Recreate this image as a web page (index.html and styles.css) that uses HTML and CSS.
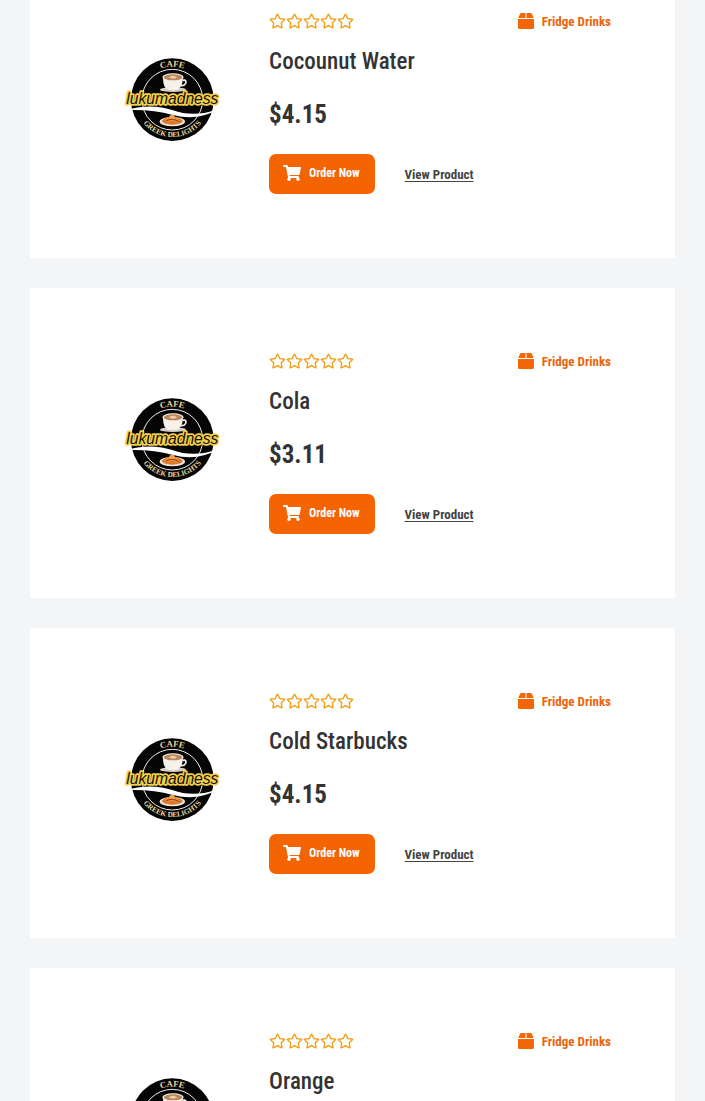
FILE: index.html
```html
<!DOCTYPE html>
<html lang="en">

<head>
    <meta charset="UTF-8">
    <meta name="viewport" content="width=device-width, initial-scale=1.0">
    <title>Fridge Drinks</title>
    <link rel="stylesheet" href="styles.css">
</head>

<body>
    <!-- shared icons -->
    <svg class="sprite" width="0" height="0" aria-hidden="true">
        <symbol id="star" viewBox="0 0 576 512">
            <path d="M528.1 171.5L382 150.2 316.7 17.8c-11.7-23.6-45.6-23.9-57.4 0L194 150.2 47.9 171.5c-26.2 3.8-36.7 36.1-17.7 54.6l105.7 103-25 145.500c-4.500 26.300 23.200 46 46.400 33.700L288 439.600l130.700 68.700c23.200 12.200 50.900-7.400 46.400-33.700l-25-145.500 105.700-103c19-18.500 8.500-50.800-17.700-54.600zM388.600 312.300l23.700 138.400L288 385.400l-124.300 65.300 23.700-138.400-100.600-98 139-20.200 62.200-126 62.200 126 139 20.200-100.600 98z" />
        </symbol>
        <symbol id="stars" viewBox="0 0 85 16">
            <use href="#star" x="0" width="17" height="16" />
            <use href="#star" x="17" width="17" height="16" />
            <use href="#star" x="34" width="17" height="16" />
            <use href="#star" x="51" width="17" height="16" />
            <use href="#star" x="68" width="17" height="16" />
        </symbol>
        <symbol id="box" viewBox="0 0 16 16">
            <path d="M3.500 0H7.500V5H0.300L2 1.100Q2.400 0 3.500 0zM8.500 0H12.500Q13.600 0 14 1.100L15.700 5H8.500zM0 6H16V14.500Q16 16 14.500 16H1.500Q0 16 0 14.500z" />
        </symbol>
        <symbol id="cart" viewBox="0 0 576 512">
            <path d="M528.100 301.300l47.300-208C578.800 78.300 567.400 64 552 64H159.200l-9.200-44.800C147.800 8 137.900 0 126.500 0H24C10.700 0 0 10.700 0 24v16c0 13.300 10.700 24 24 24h69.900l70.200 343.400C147.300 417.100 136 435.200 136 456c0 30.900 25.100 56 56 56s56-25.100 56-56c0-15.700-6.400-29.800-16.800-40h209.600C430.400 426.200 424 440.300 424 456c0 30.900 25.100 56 56 56s56-25.100 56-56c0-22.200-12.900-41.300-31.600-50.400l5.500-24.300c3.400-15-8-29.300-23.400-29.300H218.100l-6.500-32h293.100c11.200 0 20.900-7.800 23.400-18.700z" />
        </symbol>
        <symbol id="logo" viewBox="24 18 288 264">
            <path id="arc-top" fill="none" d="M70 149A99 99 0 0 1 268 149" />
            <path id="arc-bottom" fill="none" d="M57 149A112 112 0 0 0 281 149" />
            <circle cx="169" cy="149" r="124" fill="#050505" />
            <circle cx="169" cy="149" r="91" fill="none" stroke="#eee" stroke-width="3" />
            <!-- coffee cup -->
            <ellipse cx="171" cy="119" rx="39" ry="7" fill="#d9cfc8" />
            <path d="M141 85Q141 117 160 120H181Q199 116 201 85z" fill="#f7f1ec" />
            <path d="M200 91Q213 88 209 100Q205 108 195 107" fill="none" stroke="#f7f1ec" stroke-width="5" />
            <ellipse cx="171" cy="82" rx="32" ry="12" fill="#f7f1ec" />
            <ellipse cx="171" cy="82" rx="28" ry="9" fill="#b98559" />
            <path d="M158 82Q171 72 184 82Q171 90 158 82z" fill="#edcfaa" />
            <!-- white swoosh -->
            <path d="M26 181Q105 158 171 181Q235 204 307 177Q245 215 171 195Q101 176 26 181z" fill="#fff" />
            <!-- plate of loukoumades -->
            <ellipse cx="169" cy="215" rx="38" ry="14" fill="#eee4db" />
            <ellipse cx="169" cy="213" rx="31" ry="11" fill="#d97828" />
            <circle cx="155" cy="209" r="8" fill="#e98a35" />
            <circle cx="181" cy="210" r="8" fill="#e98a35" />
            <circle cx="168" cy="203" r="9" fill="#f3a14d" />
            <path d="M150 213Q169 202 188 215" fill="none" stroke="#8d3f13" stroke-width="3" />
            <text class="logo-cafe"><textPath href="#arc-top" startOffset="50%">CAFE</textPath></text>
            <text class="logo-greek"><textPath href="#arc-bottom" startOffset="50%">GREEK DELIGHTS</textPath></text>
            <text class="logo-name" x="169" y="163">lukumadness</text>
        </symbol>
    </svg>

    <main class="products">
        <article class="card">
            <div class="card-logo">
                <svg class="logo" role="img" aria-label="Lukumadness"><use href="#logo" /></svg>
            </div>
            <div class="card-body">
                <div class="card-top">
                    <svg class="stars" role="img" aria-label="No rating"><use href="#stars" /></svg>
                    <a class="category" href="#"><svg class="box" aria-hidden="true"><use href="#box" /></svg>Fridge Drinks</a>
                </div>
                <h2 class="title">Cocounut Water</h2>
                <p class="price">$4.15</p>
                <div class="actions">
                    <button class="order" type="button"><svg class="cart" aria-hidden="true"><use href="#cart" /></svg>Order Now</button>
                    <a class="view" href="#">View Product</a>
                </div>
            </div>
        </article>

        <article class="card">
            <div class="card-logo">
                <svg class="logo" role="img" aria-label="Lukumadness"><use href="#logo" /></svg>
            </div>
            <div class="card-body">
                <div class="card-top">
                    <svg class="stars" role="img" aria-label="No rating"><use href="#stars" /></svg>
                    <a class="category" href="#"><svg class="box" aria-hidden="true"><use href="#box" /></svg>Fridge Drinks</a>
                </div>
                <h2 class="title">Cola</h2>
                <p class="price">$3.11</p>
                <div class="actions">
                    <button class="order" type="button"><svg class="cart" aria-hidden="true"><use href="#cart" /></svg>Order Now</button>
                    <a class="view" href="#">View Product</a>
                </div>
            </div>
        </article>

        <article class="card">
            <div class="card-logo">
                <svg class="logo" role="img" aria-label="Lukumadness"><use href="#logo" /></svg>
            </div>
            <div class="card-body">
                <div class="card-top">
                    <svg class="stars" role="img" aria-label="No rating"><use href="#stars" /></svg>
                    <a class="category" href="#"><svg class="box" aria-hidden="true"><use href="#box" /></svg>Fridge Drinks</a>
                </div>
                <h2 class="title">Cold Starbucks</h2>
                <p class="price">$4.15</p>
                <div class="actions">
                    <button class="order" type="button"><svg class="cart" aria-hidden="true"><use href="#cart" /></svg>Order Now</button>
                    <a class="view" href="#">View Product</a>
                </div>
            </div>
        </article>

        <article class="card">
            <div class="card-logo">
                <svg class="logo" role="img" aria-label="Lukumadness"><use href="#logo" /></svg>
            </div>
            <div class="card-body">
                <div class="card-top">
                    <svg class="stars" role="img" aria-label="No rating"><use href="#stars" /></svg>
                    <a class="category" href="#"><svg class="box" aria-hidden="true"><use href="#box" /></svg>Fridge Drinks</a>
                </div>
                <h2 class="title">Orange</h2>
            </div>
        </article>
    </main>
</body>

</html>
```
FILE: styles.css
```css
* {
    margin: 0;
    padding: 0;
    box-sizing: border-box;
}
body {
    height: 100vh;
    overflow: hidden;
    background: #f3f5f7;
    color: #333;
    font-family: 'Roboto Condensed', 'Liberation Sans Narrow', 'Liberation Sans', Arial, sans-serif;
}
.sprite { position: absolute; }
.products {
    display: flex;
    flex-direction: column;
    gap: 30px;
    padding: 0 30px;
    margin-top: -52px;
}
.card {
    display: grid;
    grid-template-columns: 30% 1fr;
    gap: 20px;
    padding: 64px;
    background: #fff;
}
.card-logo {
    display: flex;
    justify-content: center;
    align-items: flex-start;
    padding-top: 44px;
}
.logo {
    width: 96px;
    height: 88px;
}
.logo-cafe {
    font: bold 26px 'Liberation Serif', serif;
    fill: #e5d9a0;
    text-anchor: middle;
}
.logo-greek {
    font: bold 22px 'Liberation Serif', serif;
    fill: #e5d9a0;
    text-anchor: middle;
}
.logo-name {
    font: italic 47px 'Liberation Sans', sans-serif;
    fill: #161200;
    stroke: #f3cf4e;
    stroke-width: 10px;
    stroke-linejoin: round;
    paint-order: stroke;
    text-anchor: middle;
}
.card-top {
    display: flex;
    justify-content: space-between;
    align-items: center;
    height: 18px;
}
.stars {
    width: 85px;
    height: 16px;
    fill: #f1a21b;
}
.category {
    display: flex;
    align-items: center;
    gap: 8px;
    color: #e9640c;
    font-size: 13px;
    font-weight: bold;
    text-decoration: none;
}
.box {
    width: 16px;
    height: 16px;
    fill: #f26606;
}
.title {
    margin-top: 16px;
    font-size: 23px;
    font-weight: 500;
    line-height: 32px;
}
.price {
    margin-top: 18px;
    font-size: 25px;
    font-weight: bold;
    line-height: 38px;
}
.actions {
    display: flex;
    align-items: center;
    gap: 30px;
    margin-top: 20px;
}
.order {
    display: flex;
    align-items: center;
    gap: 8px;
    height: 40px;
    padding: 0 15px 2px 14px;
    border: none;
    border-radius: 7px;
    background: #f56403;
    color: #fff;
    font-family: inherit;
    font-size: 12px;
    font-weight: bold;
}
.cart {
    width: 18px;
    height: 16px;
    fill: #fff;
}
.view {
    color: #444;
    font-size: 13px;
    font-weight: bold;
    text-underline-offset: 2px;
}
```
